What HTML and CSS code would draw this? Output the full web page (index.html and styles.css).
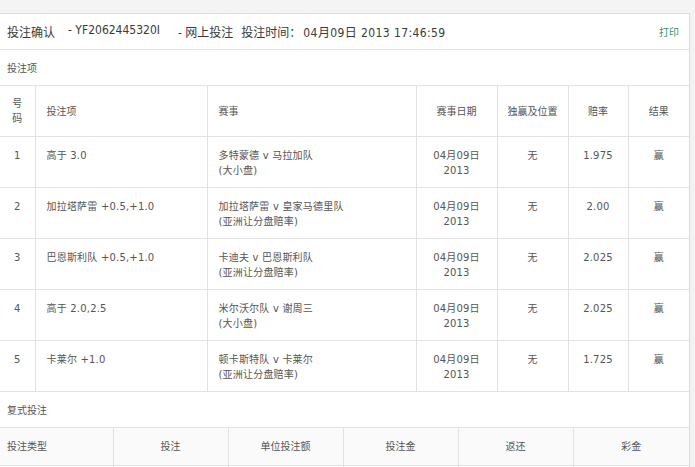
FILE: index.html
```html
<!DOCTYPE html>
<html lang="zh">
<head>
<meta charset="utf-8">
<title>投注确认</title>
<link rel="stylesheet" href="styles.css">
</head>
<body>
<div class="topstrip"></div>
<div class="panel">
  <div class="titlebar">
    <div class="title">
      <span class="t-main">投注确认</span>
      <span class="t-id">- YF2062445320I</span>
      <span class="t-type">- 网上投注</span>
      <span class="t-time">投注时间：</span>
      <span class="t-date">04月09日 2013 17:46:59</span>
    </div>
    <a class="print">打印</a>
  </div>
  <div class="label">投注项</div>
  <table class="bets">
    <colgroup>
      <col class="c1"><col class="c2"><col class="c3"><col class="c4"><col class="c5"><col class="c6"><col class="c7">
    </colgroup>
    <thead>
      <tr>
        <th class="ctr">号<br>码</th>
        <th class="lft">投注项</th>
        <th class="lft">赛事</th>
        <th class="ctr">赛事日期</th>
        <th class="ctr">独赢及位置</th>
        <th class="ctr">赔率</th>
        <th class="ctr">结果</th>
      </tr>
    </thead>
    <tbody>
      <tr>
        <td class="ctr">1</td>
        <td>高于 3.0</td>
        <td>多特蒙德 v 马拉加队<br>(大小盘)</td>
        <td class="ctr">04月09日<br>2013</td>
        <td class="ctr">无</td>
        <td class="ctr">1.975</td>
        <td class="ctr">赢</td>
      </tr>
      <tr>
        <td class="ctr">2</td>
        <td>加拉塔萨雷 +0.5,+1.0</td>
        <td>加拉塔萨雷 v 皇家马德里队<br>(亚洲让分盘赔率)</td>
        <td class="ctr">04月09日<br>2013</td>
        <td class="ctr">无</td>
        <td class="ctr">2.00</td>
        <td class="ctr">赢</td>
      </tr>
      <tr>
        <td class="ctr">3</td>
        <td>巴恩斯利队 +0.5,+1.0</td>
        <td>卡迪夫 v 巴恩斯利队<br>(亚洲让分盘赔率)</td>
        <td class="ctr">04月09日<br>2013</td>
        <td class="ctr">无</td>
        <td class="ctr">2.025</td>
        <td class="ctr">赢</td>
      </tr>
      <tr>
        <td class="ctr">4</td>
        <td>高于 2.0,2.5</td>
        <td>米尔沃尔队 v 谢周三<br>(大小盘)</td>
        <td class="ctr">04月09日<br>2013</td>
        <td class="ctr">无</td>
        <td class="ctr">2.025</td>
        <td class="ctr">赢</td>
      </tr>
      <tr>
        <td class="ctr">5</td>
        <td>卡莱尔 +1.0</td>
        <td>顿卡斯特队 v 卡莱尔<br>(亚洲让分盘赔率)</td>
        <td class="ctr">04月09日<br>2013</td>
        <td class="ctr">无</td>
        <td class="ctr">1.725</td>
        <td class="ctr">赢</td>
      </tr>
    </tbody>
  </table>
  <div class="label">复式投注</div>
  <table class="multi">
    <colgroup>
      <col class="m1"><col class="m2"><col class="m2"><col class="m2"><col class="m2"><col class="m6">
    </colgroup>
    <thead>
      <tr>
        <th class="lft first">投注类型</th>
        <th class="ctr">投注</th>
        <th class="ctr">单位投注额</th>
        <th class="ctr">投注金</th>
        <th class="ctr">返还</th>
        <th class="ctr">彩金</th>
      </tr>
    </thead>
    <tbody>
      <tr>
        <td class="first">&nbsp;</td>
        <td>&nbsp;</td>
        <td>&nbsp;</td>
        <td>&nbsp;</td>
        <td>&nbsp;</td>
        <td>&nbsp;</td>
      </tr>
    </tbody>
  </table>
</div>
</body>
</html>
```

FILE: styles.css
```css
* { box-sizing: border-box; }
html, body {
  margin: 0;
  padding: 0;
  background: #f2f2f2;
  font-family: "DejaVu Sans", "Noto Sans CJK SC", sans-serif;
  color: #555;
}
.topstrip {
  height: 13px;
  background: #f4f4f4;
}
.panel {
  width: 690px;
  background: #fff;
  border-top: 1px solid #dcdcdc;
  border-right: 1px solid #dcdcdc;
}
.titlebar {
  height: 36px;
  border-bottom: 1px solid #e2e2e2;
  display: flex;
  align-items: center;
  justify-content: space-between;
  padding: 0 10px 0 7px;
}
.title {
  font-family: "DejaVu Sans Condensed", "DejaVu Sans", "Noto Sans CJK SC", sans-serif;
  font-size: 12px;
  color: #3a3a3a;
  display: flex;
  white-space: pre;
}
.t-id { margin-left: 13px; }
.t-type { margin-left: 18px; }
.t-time { margin-left: 8px; }
.t-date { margin-left: 2px; letter-spacing: 0.4px; }
.print {
  font-size: 10px;
  color: #3a9466;
  text-decoration: none;
}
.label {
  height: 35px;
  display: flex;
  align-items: center;
  padding-left: 7px;
  font-size: 10px;
  color: #555;
}
table {
  width: 689px;
  border-collapse: collapse;
  table-layout: fixed;
  font-size: 10px;
  color: #555;
}
th, td {
  border: 1px solid #e2e2e2;
  line-height: 15px;
  padding: 0 11px;
  font-weight: normal;
}
th:first-child, td:first-child { border-left: none; }
th:last-child, td:last-child { border-right: none; }
.bets th {
  height: 51px;
  vertical-align: middle;
}
.bets td {
  height: 51px;
  vertical-align: top;
  padding-top: 11px;
  letter-spacing: 0.2px;
}
.c1 { width: 35px; }
.c2 { width: 172px; }
.c3 { width: 209px; }
.c4 { width: 81px; }
.c5 { width: 71px; }
.c6 { width: 60px; }
.c7 { width: 61px; }
.m1 { width: 113px; }
.m2 { width: 115px; }
.m6 { width: 116px; }
.ctr { text-align: center; padding-left: 2px; padding-right: 2px; }
.lft { text-align: left; }
.multi th {
  height: 38px;
  background: #fafafa;
}
.multi td { height: 36px; }
.multi .first { padding-left: 7px; text-align: left; }
```
